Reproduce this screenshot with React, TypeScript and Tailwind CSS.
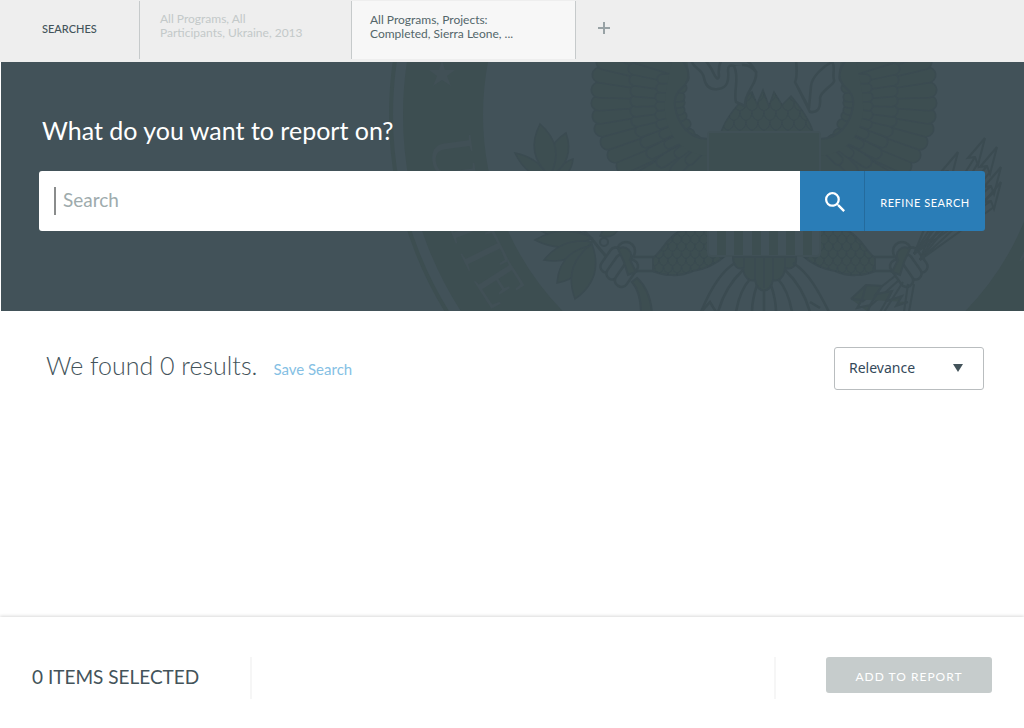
import type { ReactNode } from "react";

const BASE = "#425259";
const DARK = "#3d4e51";
const LINE = "#3b4b51";
const LETTER = "#415056";

type Segment = [number, number, number, number];

const outerFeathers: Segment[] = [
  [632, 184, 690, 150],
  [624, 166, 684, 138],
  [615, 155, 680, 128],
  [608, 142, 676, 118],
  [602, 129, 672, 110],
  [600, 116, 672, 104],
  [599, 103, 672, 98],
  [599, 90, 672, 92],
  [600, 75, 672, 86],
  [604, 62, 672, 78],
  [610, 50, 672, 70],
];

const middleFeathers: Segment[] = [
  [676, 170, 700, 146],
  [662, 162, 694, 140],
  [652, 153, 688, 134],
  [646, 142, 682, 126],
  [641, 131, 678, 118],
  [637, 121, 676, 112],
  [636, 111, 676, 106],
  [636, 101, 676, 100],
  [636, 91, 676, 94],
  [635, 80, 676, 86],
  [634, 69, 676, 78],
  [638, 58, 676, 70],
];

const innerFeathers: Segment[] = [
  [690, 160, 704, 146],
  [679, 153, 696, 140],
  [669, 144, 690, 134],
  [664, 134, 686, 124],
  [661, 124, 682, 116],
  [660, 115, 680, 110],
  [660, 106, 680, 103],
  [660, 97, 680, 97],
  [661, 88, 682, 88],
  [662, 79, 684, 78],
];

// Each leaf runs from its base to its tip; the last value is its half width.
const leaves: [number, number, number, number, number][] = [
  [552, 182, 515, 153, 12],
  [556, 180, 573, 159, 9],
  [551, 176, 566, 133, 18],
  [550, 176, 540, 124, 21],
  [588, 236, 540, 230, 12],
  [592, 238, 535, 240, 16],
  [592, 242, 544, 260, 15],
  [590, 246, 557, 283, 19],
  [592, 244, 575, 299, 22],
  [600, 236, 620, 226, 10],
];

const arrowTips: [number, number][] = [
  [958, 152],
  [985, 138],
  [997, 147],
  [1001, 167],
  [1001, 182],
];

const stripes = [717, 734, 752, 769, 786, 803];

function Feathers({ items, width }: { items: Segment[]; width: number }) {
  return (
    <>
      {items.map(([x1, y1, x2, y2]) => (
        <g key={`${x1}-${y1}`} strokeLinecap="round">
          <line x1={x1} y1={y1} x2={x2} y2={y2} stroke={LINE} strokeWidth={width} />
          <line x1={x1} y1={y1} x2={x2} y2={y2} stroke={DARK} strokeWidth={width - 3} />
        </g>
      ))}
    </>
  );
}

function Leaf({ leaf }: { leaf: [number, number, number, number, number] }) {
  const [bx, by, tx, ty, w] = leaf;
  const len = Math.hypot(tx - bx, ty - by);
  const nx = (-(ty - by) / len) * w;
  const ny = ((tx - bx) / len) * w;
  const mx = bx + (tx - bx) * 0.5;
  const my = by + (ty - by) * 0.5;
  return (
    <path
      d={`M${bx} ${by}Q${mx + nx} ${my + ny} ${tx} ${ty}Q${mx - nx} ${my - ny} ${bx} ${by}Z`}
      fill={DARK}
      stroke={LINE}
      strokeWidth="1.5"
    />
  );
}

function Scales({ x, y, cols, rows, size }: { x: number; y: number; cols: number; rows: number; size: number }) {
  const marks: ReactNode[] = [];
  for (let r = 0; r < rows; r++) {
    for (let c = 0; c < cols; c++) {
      const px = x + c * size + (r % 2 ? size / 2 : 0);
      const py = y + r * size * 0.8;
      marks.push(
        <path key={`${r}-${c}`} d={`M${px} ${py}c0 ${size} ${size} ${size} ${size} 0`} fill="none" stroke={LINE} strokeWidth="1" />,
      );
    }
  }
  return <>{marks}</>;
}

function SideOfEagle() {
  return (
    <g>
      <path d="M610 50H684C690 68 690 78 684 86C676 93 674 98 675 106C677 122 688 139 708 139V190H640L612 130Z" fill={DARK} />
      <Feathers items={outerFeathers} width={17} />
      <Feathers items={middleFeathers} width={13} />
      <Feathers items={innerFeathers} width={11} />
      <path d="M682 60C690 70 690 79 684 86C676 93 674 98 675 106C677 122 688 139 708 139V156C684 154 668 138 665 112C664 92 670 74 672 60Z" fill={DARK} />
      <path d="M682 60C690 70 690 79 684 86C676 93 674 98 675 106C677 122 688 139 708 139" fill="none" stroke={LINE} strokeWidth="2" />
      <path d="M634 257H655M634 271H658" stroke={LINE} strokeWidth="2.5" />
      <path d="M653 258C662 252 666 238 680 231H712L712 256H725C716 264 706 269 693 271C680 277 664 276 653 271Z" fill={DARK} stroke={LINE} strokeWidth="2" />
      <g clipPath="url(#thigh)">
        <Scales x={650} y={230} cols={9} rows={7} size={9} />
      </g>
      <g fill={BASE} stroke={LINE} strokeWidth="2.5">
        <ellipse cx="626" cy="251" rx="9" ry="9" />
        <rect x="597" y="254" width="28" height="12" rx="6" transform="rotate(-55 611 260)" />
        <rect x="603" y="261" width="28" height="12" rx="6" transform="rotate(-55 617 267)" />
        <rect x="611" y="267" width="30" height="13" rx="6" transform="rotate(-55 626 273)" />
      </g>
      <path d="M618 249C626 244 634 252 630 260L636 272L628 275L624 262Z" fill={DARK} stroke={LINE} strokeWidth="2" />
    </g>
  );
}

function Seal() {
  return (
    <svg aria-hidden="true" viewBox="384 62 640 249" preserveAspectRatio="xMaxYMin slice" className="absolute right-0 top-0 h-full w-[640px]">
      <defs>
        <path id="motto-start" d="M430 115A334 334 0 0 0 764 449" />
        <path id="motto-end" d="M764 449A334 334 0 0 0 1098 115" />
        <clipPath id="thigh">
          <path d="M653 258C662 252 666 238 680 231H712V256H725C716 264 706 269 693 271C680 277 664 276 653 271Z" />
        </clipPath>
        <clipPath id="breast">
          <path d="M721 131C726 118 735 108 744 98L752 92 757 104 763 90 769 106 774 92 782 105 791 96C801 108 810 120 812 131Z" />
        </clipPath>
      </defs>
      <circle cx="764" cy="115" r="373" fill="none" stroke={DARK} strokeWidth="4" />
      <circle cx="764" cy="115" r="321" fill="none" stroke={DARK} strokeWidth="80" />
      <path d="M442 60L445 70 455 70 447 76 451 86 442 80 433 86 437 76 429 70 439 70Z" fill={LETTER} />
      <g fill={LETTER} className="font-['Liberation_Serif',serif] text-[62px]">
        <text>
          <textPath href="#motto-start" startOffset="24">
            UNITE
          </textPath>
        </text>
        <text textAnchor="end">
          <textPath href="#motto-end" startOffset="500">
            RICA
          </textPath>
        </text>
      </g>

      <SideOfEagle />
      <g transform="translate(1528 0) scale(-1 1)">
        <SideOfEagle />
      </g>

      <path d="M721 132C726 118 735 108 744 98L752 92 757 104 763 90 769 106 774 92 782 105 791 96C801 108 810 120 813 132Z" fill={DARK} stroke={LINE} strokeWidth="1.5" />
      <g clipPath="url(#breast)">
        <Scales x={716} y={92} cols={9} rows={5} size={12} />
      </g>
      <g fill={BASE} stroke={LINE} strokeWidth="2.5" strokeLinejoin="round">
        <path d="M691 60C694 70 702 68 704 78C706 88 712 90 718 89C728 88 729 80 728 70Q728 64 734 66C742 68 746 64 752 68L756 72C750 60 742 56 728 56C720 58 718 66 719 76Q718 82 714 74C711 66 706 62 704 58Z" />
        <path d="M734 66C740 78 733 92 736 102L745 106C744 92 758 84 756 72Q750 64 742 65" />
        <path d="M796 60C797 70 797 78 795 82L810 112C818 113 821 108 820 98C821 90 836 84 834 80C832 74 836 66 832 62C824 66 812 76 811 86L809 108L795 82" />
      </g>

      <rect x="708" y="132" width="112" height="124" rx="3" fill={BASE} stroke="#405056" strokeWidth="2" />
      <rect x="709" y="133" width="110" height="50" fill={DARK} />
      {stripes.map((x) => (
        <rect key={x} x={x} y="183" width="9" height="72" fill={DARK} />
      ))}

      <path d="M733 257C733 266 738 270 743 268C744 278 750 282 755 280C758 294 770 294 773 280C778 282 784 278 785 268C792 270 797 266 796 257Z" fill={DARK} stroke={LINE} strokeWidth="2" />
      <path d="M744 258V268M755 258V280M764 258V288M773 258V280M785 258V268" stroke={LINE} strokeWidth="1.5" />
      <g fill="none" stroke={LINE} strokeWidth="2.5">
        <path d="M735 263C720 272 710 290 701 312M743 270C730 282 722 298 718 312M750 279C742 288 738 300 736 312M757 285C754 294 752 304 752 312M764 290V312M771 285C774 294 776 304 776 312M778 279C786 288 790 300 792 312M785 270C798 282 806 298 810 312M793 263C808 272 818 290 829 312" />
        <path d="M701 312L710 302 716 312M810 302L820 308" />
      </g>

      <path d="M632 282C639 290 641 302 641 314H652C651 298 646 286 637 278Z" fill={DARK} stroke={LINE} strokeWidth="2" />
      <path d="M585 232C594 240 598 248 606 256M552 172C558 196 568 216 585 232" fill="none" stroke={LINE} strokeWidth="3" />
      <circle cx="604" cy="242" r="4" fill={BASE} stroke={LINE} strokeWidth="2" />
      {leaves.map((leaf) => (
        <Leaf key={`${leaf[2]}-${leaf[3]}`} leaf={leaf} />
      ))}

      <g fill="none" stroke={LINE} strokeWidth="2" strokeLinejoin="miter">
        {arrowTips.map(([x, y]) => (
          <path key={x + y} d={`M${x} ${y}L${x - 17} ${y + 20}L${x - 10} ${y + 19}L${x - 7} ${y + 27}L${x} ${y}M${x - 10} ${y + 19}L914 254M${x - 7} ${y + 25}L920 260`} />
        ))}
        <path d="M895 276L862 302M899 280L868 308M903 282L884 312M908 284L904 312M914 284L909 312" />
        <path d="M851 299L866 285 882 286 876 294 892 291 887 301 902 296 896 306 908 302M851 299L862 300 857 308 870 305 868 312M866 285L862 300M882 286L870 305M892 291L880 312" fill={DARK} />
      </g>
    </svg>
  );
}

function SearchTabs() {
  return (
    <nav aria-label="Searches" className="flex h-[62px] items-start bg-[#eeeeee] pt-px">
      <h2 className="w-[139px] pl-[42px] pt-5 text-[11px] leading-4 font-medium text-[#43535a]">SEARCHES</h2>
      <a href="#ukraine" className="h-[58px] w-[212px] border-l border-[#c6cacb] pt-[11px] pl-5 text-[12px] leading-[14px] text-[#c3c9c9]">
        All Programs, All
        <br />
        Participants, Ukraine, 2013
      </a>
      <a href="#sierra-leone" aria-current="page" className="h-[58px] w-[225px] border-x border-[#c6cacb] bg-[#f7f7f7] pt-3 pl-[18px] text-[12px] leading-[14px] text-[#53666a]">
        All Programs, Projects:
        <br />
        Completed, Sierra Leone, ...
      </a>
      <button type="button" aria-label="New search" className="mt-[21px] ml-[22px] text-[#98a2a5]">
        <svg viewBox="0 0 12 12" className="size-3" aria-hidden="true">
          <path d="M6 0V12M0 6H12" stroke="currentColor" strokeWidth="2" />
        </svg>
      </button>
    </nav>
  );
}

function Hero() {
  return (
    <section className="relative ml-px h-[249px] overflow-hidden bg-[#425259] pr-[39px] pl-[38px]">
      <Seal />
      <div className="relative pt-[52px]">
        <h1 className="pl-[3px] text-[25px] leading-8 text-white">What do you want to report on?</h1>
        <form className="mt-[25px] flex h-[60px] overflow-hidden rounded-[3px]" onSubmit={(e) => e.preventDefault()}>
          <label htmlFor="query" aria-label="Search" className="flex items-center bg-white pl-[15px]">
            <span className="h-7 w-0.5 bg-[#8a8c8c]" />
          </label>
          <input
            id="query"
            type="text"
            aria-label="Search"
            placeholder="Search"
            className="min-w-0 flex-1 bg-white pb-0.5 pl-[7px] text-[19px] text-[#43535a] outline-none placeholder:text-[#9eabad]"
          />
          <button type="submit" aria-label="Search" className="flex w-16 items-center justify-center bg-[#2a7db7] pt-0.5 pl-1.5 text-white">
            <svg viewBox="3 3 17.5 17.5" className="size-5" fill="currentColor" aria-hidden="true">
              <path d="M15.5 14h-.79l-.28-.27A6.471 6.471 0 0 0 16 9.5 6.5 6.5 0 1 0 9.5 16c1.61 0 3.09-.59 4.23-1.57l.27.28v.79l5 4.99L20.49 19l-4.99-5zm-6 0C7.01 14 5 11.99 5 9.5S7.01 5 9.5 5 14 7.01 14 9.5 11.99 14 9.5 14z" />
            </svg>
          </button>
          <button type="button" className="w-[121px] border-l border-[#246b9d] bg-[#2a7db7] pt-1 text-[11px] tracking-wider text-white">
            REFINE SEARCH
          </button>
        </form>
      </div>
    </section>
  );
}

function Results() {
  return (
    <main className="flex flex-1 items-start justify-between pt-9 pr-10 pl-[46px]">
      <div className="flex items-baseline gap-4">
        <p className="text-[25px] leading-9 font-light text-[#43535a]">We found 0 results.</p>
        <a href="#save" className="text-[15px] leading-5 text-[#85bfe4]">
          Save Search
        </a>
      </div>
      <div className="relative">
        <select aria-label="Sort results" className="h-[43px] w-[150px] appearance-none rounded-[3px] border border-[#b9bdbf] bg-white pb-0.5 pl-3.5 font-['Noto_Sans',sans-serif] text-[14px] text-[#34495a]">
          <option>Relevance</option>
        </select>
        <svg viewBox="0 0 10 8" className="pointer-events-none absolute top-[17px] right-[21px] h-2 w-2.5" aria-hidden="true">
          <path d="M0 0H10L5 8Z" fill="#43535a" />
        </svg>
      </div>
    </main>
  );
}

function SelectionBar() {
  return (
    <footer className="flex h-[111px] items-start bg-white pt-10 pr-8 pl-8 shadow-[0_-1px_3px_rgba(0,0,0,0.15)]">
      <p className="w-[218px] pt-2 text-[19px] leading-6 text-[#43535a]">0 ITEMS SELECTED</p>
      <div className="h-[42px] flex-1 border-x-2 border-[#f6f6f6]" />
      <button type="button" className="ml-[50px] h-9 w-[166px] rounded-[3px] bg-[#c6cccc] pt-1 text-[12px] tracking-[1px] text-white">
        ADD TO REPORT
      </button>
    </footer>
  );
}

export default function App() {
  return (
    <div className="flex min-h-screen flex-col bg-white font-['Lato','Open_Sans',sans-serif]">
      <SearchTabs />
      <Hero />
      <Results />
      <SelectionBar />
    </div>
  );
}
